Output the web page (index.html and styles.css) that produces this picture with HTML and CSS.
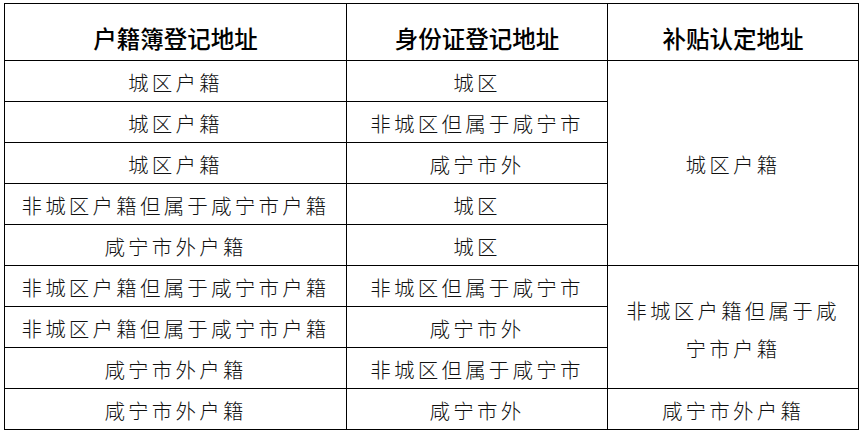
FILE: index.html
```html
<!DOCTYPE html>
<html lang="zh-CN">
<head>
<meta charset="utf-8">
<link rel="stylesheet" href="styles.css">
</head>
<body>
<table class="grid">
  <colgroup>
    <col class="c1"><col class="c2"><col class="c3">
  </colgroup>
  <thead>
    <tr class="head">
      <th>户籍簿登记地址</th>
      <th>身份证登记地址</th>
      <th>补贴认定地址</th>
    </tr>
  </thead>
  <tbody>
    <tr><td>城区户籍</td><td>城区</td><td rowspan="5">城区户籍</td></tr>
    <tr><td>城区户籍</td><td>非城区但属于咸宁市</td></tr>
    <tr><td>城区户籍</td><td>咸宁市外</td></tr>
    <tr><td>非城区户籍但属于咸宁市户籍</td><td>城区</td></tr>
    <tr><td>咸宁市外户籍</td><td>城区</td></tr>
    <tr><td>非城区户籍但属于咸宁市户籍</td><td>非城区但属于咸宁市</td><td rowspan="3" class="wrap">非城区户籍但属于咸宁市户籍</td></tr>
    <tr><td>非城区户籍但属于咸宁市户籍</td><td>咸宁市外</td></tr>
    <tr><td>咸宁市外户籍</td><td>非城区但属于咸宁市</td></tr>
    <tr><td>咸宁市外户籍</td><td>咸宁市外</td><td>咸宁市外户籍</td></tr>
  </tbody>
</table>
</body>
</html>
```

FILE: styles.css
```css
html, body {
  margin: 0;
  padding: 0;
  background: #fff;
}
body {
  padding: 3px 0 0 4px;
  font-family: "Noto Sans CJK SC", "Noto Sans", sans-serif;
  color: #000;
}
.grid {
  border-collapse: collapse;
  width: 854px;
  table-layout: fixed;
}
.c1 { width: 342px; }
.c2 { width: 261px; }
.c3 { width: 251px; }
.grid th, .grid td {
  border: 1px solid #000;
  text-align: center;
  vertical-align: middle;
  padding: 0;
}
.grid th {
  height: 57px;
  font-size: 23.5px;
  font-weight: 500;
  padding-top: 12px;
  box-sizing: border-box;
  line-height: 30px;
}
.grid td {
  height: 41px;
  font-size: 20.5px;
  font-weight: 300;
  letter-spacing: 3.2px;
  line-height: 30px;
  padding-top: 2px;
  box-sizing: border-box;
  color: #111;
}
.grid td.wrap {
  padding: 4px 10px 0;
  line-height: 38px;
}
```
